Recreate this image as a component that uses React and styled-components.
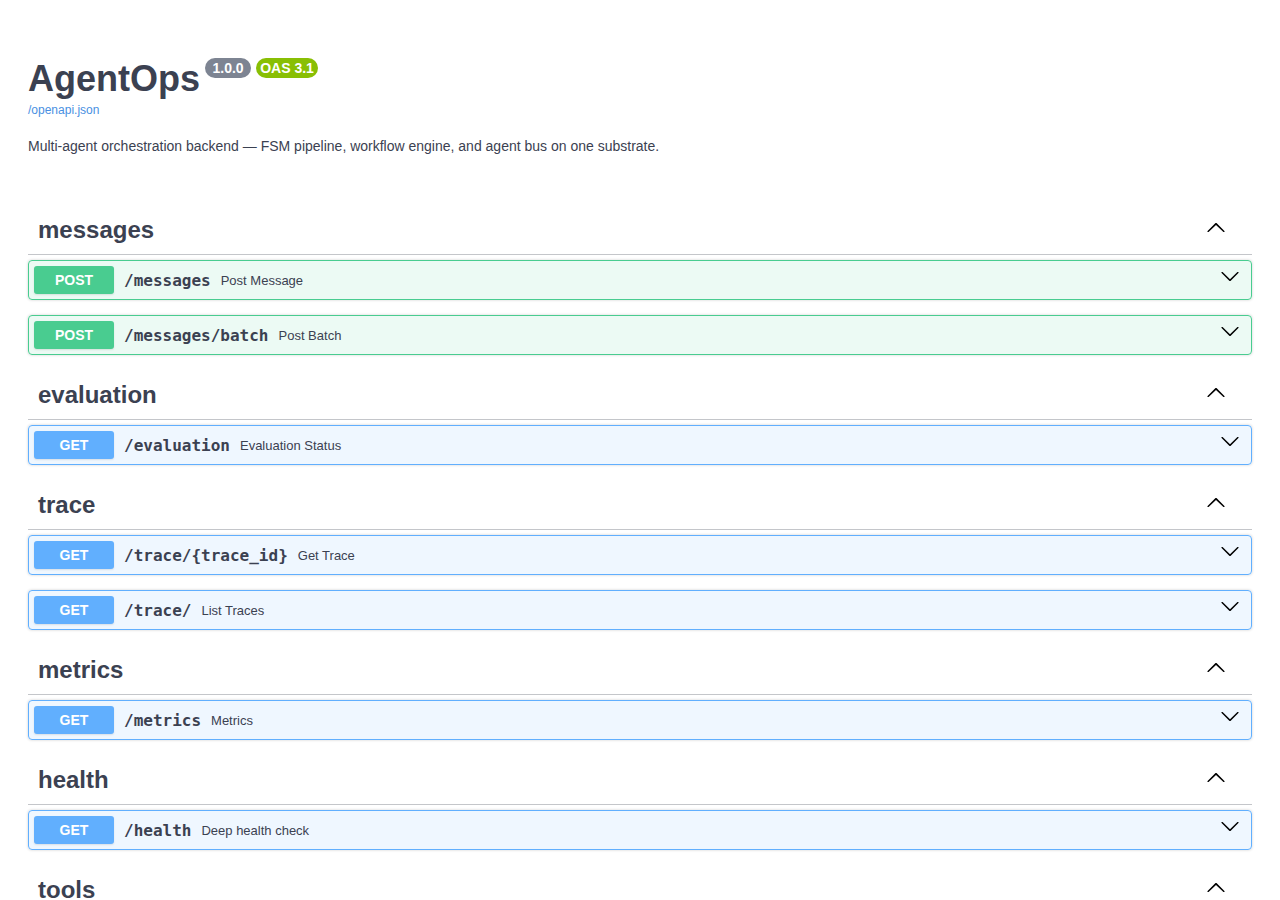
import React from 'react';
import styled, { createGlobalStyle } from 'styled-components';

const tags = [
  {
    name: 'messages',
    ops: [
      { method: 'post', path: '/messages', summary: 'Post Message' },
      { method: 'post', path: '/messages/batch', summary: 'Post Batch' },
    ],
  },
  {
    name: 'evaluation',
    ops: [{ method: 'get', path: '/evaluation', summary: 'Evaluation Status' }],
  },
  {
    name: 'trace',
    ops: [
      { method: 'get', path: '/trace/{trace_id}', summary: 'Get Trace' },
      { method: 'get', path: '/trace/', summary: 'List Traces' },
    ],
  },
  {
    name: 'metrics',
    ops: [{ method: 'get', path: '/metrics', summary: 'Metrics' }],
  },
  {
    name: 'health',
    ops: [{ method: 'get', path: '/health', summary: 'Deep health check' }],
  },
  {
    name: 'tools',
    ops: [{ method: 'get', path: '/tools', summary: 'List Tools' }],
  },
];

const methodColors = {
  post: { main: '#49cc90', bg: 'rgba(73, 204, 144, 0.1)' },
  get: { main: '#61affe', bg: 'rgba(97, 175, 254, 0.1)' },
};

const ArrowUp = () => (
  <svg width="20" height="20" viewBox="0 0 20 20" aria-hidden="true">
    <path
      fill="#000"
      d="M17.418 14.908c.271.268.709.268.979 0s.271-.701 0-.969l-7.908-7.83c-.27-.268-.707-.268-.979 0l-7.908 7.83c-.27.268-.27.701 0 .969.271.268.709.268.978 0L10 7.928l7.418 6.98z"
    />
  </svg>
);

const ArrowDown = () => (
  <svg width="20" height="20" viewBox="0 0 20 20" aria-hidden="true">
    <path
      fill="#000"
      d="M17.418 6.109c.272-.268.709-.268.979 0s.271.701 0 .969l-7.908 7.83c-.27.268-.707.268-.979 0l-7.908-7.83c-.27-.268-.27-.701 0-.969.271-.268.709-.268.979 0L10 13.25l7.418-7.141z"
    />
  </svg>
);

const Operation = ({ method, path, summary }) => (
  <OpBlock method={method}>
    <Summary>
      <Method method={method}>{method.toUpperCase()}</Method>
      <Path>{path}</Path>
      <Description>{summary}</Description>
      <OpArrow>
        <ArrowDown />
      </OpArrow>
    </Summary>
  </OpBlock>
);

export default function App() {
  return (
    <>
      <GlobalStyle />
      <Wrapper>
        <Info>
          <Title>
            AgentOps
            <Stamp wide>1.0.0</Stamp>
            <Stamp oas>OAS 3.1</Stamp>
          </Title>
          <SpecLink href="#">/openapi.json</SpecLink>
          <InfoText>
            Multi-agent orchestration backend — FSM pipeline, workflow engine,
            and agent bus on one substrate.
          </InfoText>
        </Info>
        {tags.map(tag => (
          <TagSection key={tag.name}>
            <TagHeading>
              <TagName>{tag.name}</TagName>
              <TagArrow>
                <ArrowUp />
              </TagArrow>
            </TagHeading>
            {tag.ops.map(op => (
              <Operation key={op.method + op.path} {...op} />
            ))}
          </TagSection>
        ))}
      </Wrapper>
    </>
  );
}

const GlobalStyle = createGlobalStyle`
  body {
    margin: 8px;
    background: #fff;
    font-family: "Liberation Sans", Arial, sans-serif;
    color: #3b4151;
  }
`;

const Wrapper = styled.div`
  max-width: 1460px;
  margin: 0 auto;
  padding: 0 20px;
  box-sizing: border-box;
`;

const Info = styled.div`
  margin: 50px 0 51px;
`;

const Title = styled.h2`
  display: flex;
  align-items: flex-start;
  margin: 0;
  font-size: 36px;
  line-height: 41px;
  font-weight: 700;
  color: #3b4151;
`;

const Stamp = styled.span`
  display: inline-block;
  margin-left: ${p => (p.oas ? 5 : 5)}px;
  padding: 2px ${p => (p.wide ? 7.5 : 4)}px;
  border-radius: 57px;
  background: ${p => (p.oas ? '#89bf04' : '#7d8492')};
  color: #fff;
  font-size: 14px;
  line-height: 16px;
  font-weight: 700;
`;

const SpecLink = styled.a`
  display: block;
  margin-top: 4px;
  font-size: 12px;
  line-height: 14px;
  color: #4990e2;
  text-decoration: none;
`;

const InfoText = styled.p`
  margin: 21px 0 0;
  font-size: 14px;
  line-height: 16px;
  color: #3b4151;
`;

const TagSection = styled.div`
  display: flex;
  flex-direction: column;
`;

const TagHeading = styled.h3`
  display: flex;
  align-items: flex-start;
  margin: 0 0 5px;
  padding: 10px 20px 10px 10px;
  border-bottom: 1px solid rgba(59, 65, 81, 0.3);
  font-size: 24px;
  line-height: 29px;
  font-weight: 700;
  color: #3b4151;
`;

const TagName = styled.span`
  flex: 1;
`;

const TagArrow = styled.span`
  display: flex;
  margin: 2px 6px 0 0;
`;

const OpBlock = styled.div`
  margin: 0 0 15px;
  border: 1px solid ${p => methodColors[p.method].main};
  border-radius: 4px;
  background: ${p => methodColors[p.method].bg};
  box-shadow: 0 0 3px rgba(0, 0, 0, 0.19);
`;

const Summary = styled.div`
  display: flex;
  align-items: center;
  padding: 5px;
`;

const Method = styled.span`
  min-width: 80px;
  padding: 6px 0;
  border-radius: 3px;
  background: ${p => methodColors[p.method].main};
  box-shadow: 0 1px 2px rgba(0, 0, 0, 0.1);
  color: #fff;
  font-size: 14px;
  line-height: 16px;
  font-weight: 700;
  text-align: center;
`;

const Path = styled.span`
  padding: 0 10px;
  font-family: "DejaVu Sans Mono", "Liberation Mono", monospace;
  font-size: 16px;
  font-weight: 700;
  color: #3b4151;
`;

const Description = styled.span`
  flex: 1;
  font-size: 13px;
  color: #3b4151;
`;

const OpArrow = styled.span`
  display: flex;
  align-self: flex-start;
  margin-right: 6px;
`;
